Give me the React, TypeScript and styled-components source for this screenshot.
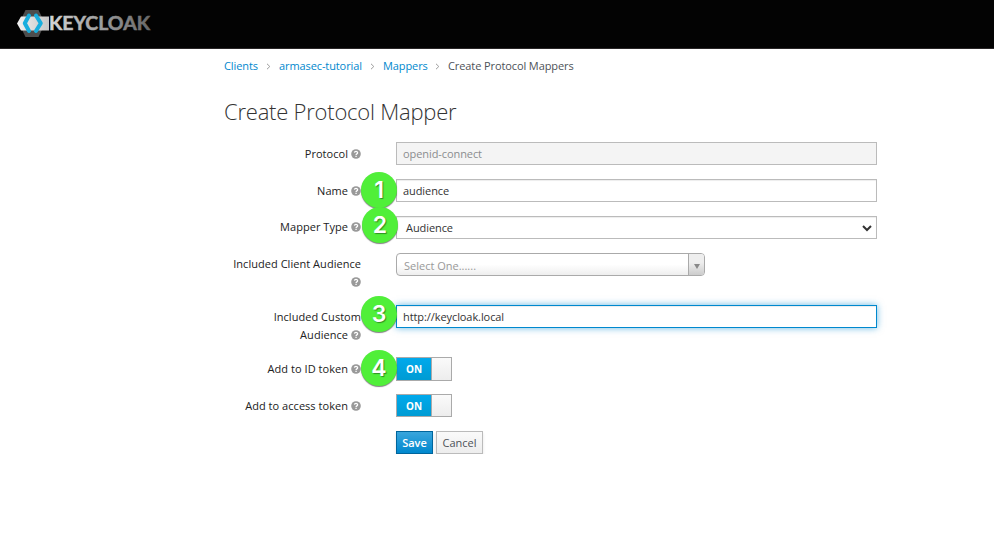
import React from "react";
import styled, { createGlobalStyle, css } from "styled-components";

const GlobalStyle = createGlobalStyle`
  * { box-sizing: border-box; }
  body {
    margin: 0;
    background: #fff;
    color: #333;
    font: 11px/18px "Open Sans", "Noto Sans", sans-serif;
  }
`;

const Header = styled.header`
  height: 49px;
  padding: 8px 0 0 16px;
  background: #030303;
  border-bottom: 1px solid #292627;
`;

const LogoSvg = styled.svg`
  display: block;
`;

const Main = styled.main`
  width: 653px;
  margin-left: 224px;
  padding-top: 8px;
`;

const Breadcrumb = styled.nav`
  display: flex;
  align-items: center;
  height: 18px;
  white-space: nowrap;
  letter-spacing: -0.1px;
`;

const Crumb = styled.a<{ $width: number }>`
  width: ${(p) => p.$width}px;
  color: #0088ce;
  text-decoration: none;
`;

const CurrentCrumb = styled.span`
  color: #4d5258;
`;

const Separator = styled.svg`
  width: 5px;
  height: 7px;
  margin: 1px 8px 0;
`;

const Title = styled.h1`
  margin: 21px 0 16px;
  font-size: 22px;
  line-height: 30px;
  font-weight: 300;
  letter-spacing: -0.22px;
  white-space: nowrap;
`;

const Form = styled.form`
  display: flex;
  flex-direction: column;
  gap: 14px;
`;

const Row = styled.div<{ $height?: number }>`
  position: relative;
  display: grid;
  grid-template-columns: 137px 481px;
  column-gap: 35px;
  align-items: start;
  height: ${(p) => p.$height ?? 23}px;
`;

const Label = styled.label<{ $top?: number }>`
  padding-top: ${(p) => p.$top ?? 3}px;
  text-align: right;
  font-weight: 500;
  letter-spacing: 0.04px;
  color: #222;
`;

const HelpSvg = styled.svg`
  width: 10px;
  height: 10px;
  margin-left: 3px;
  vertical-align: -1px;
`;

const control = css`
  display: block;
  width: 481px;
  height: 23px;
  border: 1px solid #bbb;
  border-radius: 0;
  background: #fff;
  color: #333;
  font: inherit;
  letter-spacing: -0.08px;
`;

const TextInput = styled.input<{ $active?: boolean }>`
  ${control}
  padding: 0 5px 0 6px;
  box-shadow: inset 0 1px 1px rgba(0, 0, 0, 0.075);
  outline: none;
  &:disabled {
    background: #f4f4f4;
    color: #8b8d8f;
    box-shadow: none;
  }
  ${(p) =>
    p.$active &&
    css`
      border-color: #0088ce;
      box-shadow: inset 0 1px 1px rgba(0, 0, 0, 0.075), 0 0 7px rgba(0, 136, 206, 0.6);
    `}
`;

const SelectBox = styled.div`
  ${control}
  display: flex;
  align-items: center;
  justify-content: space-between;
  padding: 1px 4px 0 9px;
  box-shadow: inset 0 1px 1px rgba(0, 0, 0, 0.075);
`;

const Combo = styled.div`
  display: flex;
  width: 309px;
  height: 23px;
  overflow: hidden;
  border: 1px solid #aaa;
  border-radius: 4px;
  background: linear-gradient(to top, #eee 0%, #fff 50%);
`;

const ComboText = styled.span`
  flex: 1;
  padding: 3px 0 0 7px;
  color: #999;
`;

const ComboArrow = styled.span`
  display: flex;
  align-items: center;
  justify-content: center;
  width: 16px;
  padding-top: 4px;
  border-left: 1px solid #aaa;
  background: linear-gradient(to top, #ccc 0%, #eee 60%);
`;

const Switch = styled.div<{ $height: number }>`
  display: flex;
  width: 56px;
  height: ${(p) => p.$height}px;
  border: 1px solid #aaa;
`;

const SwitchOn = styled.span`
  display: flex;
  align-items: center;
  justify-content: center;
  width: 34px;
  background: linear-gradient(#00a9ec, #009bd3);
  color: #fff;
  font-size: 10px;
  font-weight: 700;
`;

const SwitchKnob = styled.span`
  flex: 1;
  border-left: 1px solid #aaa;
  background: linear-gradient(#fafafa, #ededed);
`;

const Actions = styled.div`
  display: flex;
  gap: 3px;
  padding-left: 172px;
`;

const Button = styled.button<{ $primary?: boolean; $width: number }>`
  width: ${(p) => p.$width}px;
  height: 23px;
  padding: 0;
  border: 1px solid #bbb;
  background: linear-gradient(#fafafa, #ededed);
  color: #4d5258;
  font: inherit;
  font-weight: 600;
  box-shadow: 0 2px 3px rgba(3, 3, 3, 0.1);
  ${(p) =>
    p.$primary
      ? css`
          border-color: #00659c;
          background: linear-gradient(#39a5dc, #0088ce);
          color: #fff;
        `
      : css`
          font-weight: 500;
        `}
`;

const Badge = styled.span<{ $x: number; $y: number }>`
  position: absolute;
  left: ${(p) => p.$x}px;
  top: ${(p) => p.$y}px;
  width: 36px;
  height: 36px;
  border-radius: 50%;
  background: #50ef39;
  box-shadow: 0 1px 1px rgba(0, 0, 0, 0.5);
  color: #fff;
  font: 600 23px/36px Inter, "Liberation Sans", sans-serif;
  text-align: center;
  text-shadow: 1px 1px 1px rgba(0, 0, 0, 0.4);
`;

const Logo = () => (
  <LogoSvg width="138" height="32" viewBox="0 0 138 32" role="img" aria-label="Keycloak">
    <defs>
      <linearGradient id="word" gradientUnits="userSpaceOnUse" x1="34" x2="134" y1="0" y2="0">
        <stop offset="0" stopColor="#d4d4d4" />
        <stop offset="1" stopColor="#686868" />
      </linearGradient>
      <linearGradient id="band" x1="0" x2="1" y1="0" y2="0">
        <stop offset="0" stopColor="#f2f2f2" />
        <stop offset="1" stopColor="#c6c6c6" />
      </linearGradient>
    </defs>
    <path d="M9.500 2H22.500L29 15.500L22.500 29H9.500L3 15.500Z" fill="#4d4d4d" />
    <path d="M5 8.500H33V22.500H5L1 15.500Z" fill="url(#band)" />
    <path d="M13 7.500L8.800 15.300L13 23" fill="none" stroke="#18aede" strokeWidth="4" strokeLinecap="round" strokeLinejoin="round" />
    <path d="M20 7.500L24.800 15.300L20 23" fill="none" stroke="#18aede" strokeWidth="4" strokeLinecap="round" strokeLinejoin="round" />
    <text x="33" y="22" textLength="101" lengthAdjust="spacingAndGlyphs" fill="url(#word)" stroke="url(#word)" strokeWidth="0.500" fontFamily="Lato, sans-serif" fontWeight="700" fontSize="18">
      KEYCLOAK
    </text>
  </LogoSvg>
);

const Chevron = () => (
  <Separator viewBox="0 0 5 7">
    <path d="M1 .8L3.800 3.500L1 6.200" fill="none" stroke="#9c9c9c" />
  </Separator>
);

const Help = () => (
  <HelpSvg viewBox="0 0 10 10">
    <circle cx="5" cy="5" r="4.800" fill="#999" />
    <path d="M3.400 3.700Q3.600 2.300 5 2.300T6.600 3.700Q6.600 4.400 5.800 4.900Q5.100 5.300 5.100 6" fill="none" stroke="#fff" strokeWidth="1.300" />
    <path d="M4.400 6.800H5.700V8H4.400Z" fill="#fff" />
  </HelpSvg>
);

export default function App() {
  return (
    <>
      <GlobalStyle />
      <Header>
        <Logo />
      </Header>
      <Main>
        <Breadcrumb>
          <Crumb $width={34} href="#">Clients</Crumb>
          <Chevron />
          <Crumb $width={83} href="#">armasec-tutorial</Crumb>
          <Chevron />
          <Crumb $width={44} href="#">Mappers</Crumb>
          <Chevron />
          <CurrentCrumb>Create Protocol Mappers</CurrentCrumb>
        </Breadcrumb>
        <Title>Create Protocol Mapper</Title>
        <Form>
          <Row>
            <Label>Protocol<Help /></Label>
            <TextInput disabled defaultValue="openid-connect" />
          </Row>
          <Row>
            <Label>Name<Help /></Label>
            <TextInput defaultValue="audience" />
            <Badge $x={137} $y={-7}>1</Badge>
          </Row>
          <Row>
            <Label $top={2}>Mapper Type<Help /></Label>
            <SelectBox>
              Audience
              <svg width="10" height="7" viewBox="0 0 10 7">
                <path d="M1 1L5 5L9 1" fill="none" stroke="#333" strokeWidth="2" />
              </svg>
            </SelectBox>
            <Badge $x={138} $y={-9}>2</Badge>
          </Row>
          <Row $height={38}>
            <Label $top={2}>Included Client Audience <Help /></Label>
            <Combo>
              <ComboText>Select One......</ComboText>
              <ComboArrow>
                <svg width="6" height="5" viewBox="0 0 6 5">
                  <path d="M0 0H6L3 5Z" fill="#888" />
                </svg>
              </ComboArrow>
            </Combo>
          </Row>
          <Row $height={38}>
            <Label>Included Custom Audience<Help /></Label>
            <TextInput $active defaultValue="http://keycloak.local" />
            <Badge $x={137} $y={-9}>3</Badge>
          </Row>
          <Row>
            <Label>Add to ID token<Help /></Label>
            <Switch $height={24}>
              <SwitchOn>ON</SwitchOn>
              <SwitchKnob />
            </Switch>
            <Badge $x={137} $y={-7}>4</Badge>
          </Row>
          <Row>
            <Label>Add to access token<Help /></Label>
            <Switch $height={23}>
              <SwitchOn>ON</SwitchOn>
              <SwitchKnob />
            </Switch>
          </Row>
          <Actions>
            <Button type="button" $primary $width={37}>Save</Button>
            <Button type="button" $width={47}>Cancel</Button>
          </Actions>
        </Form>
      </Main>
    </>
  );
}
